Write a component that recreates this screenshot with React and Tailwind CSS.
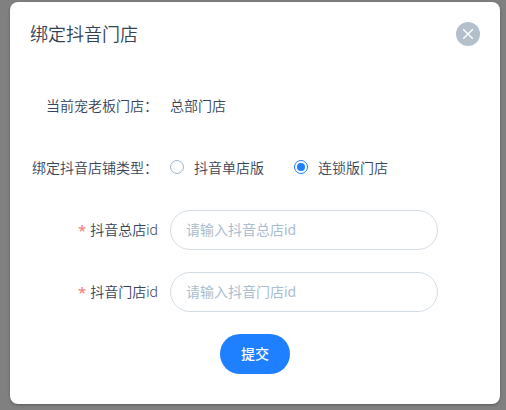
import React from "react";

const FONT = "font-['Noto_Sans','Noto_Sans_CJK_SC',sans-serif]";

function Row({ label, required = false, children }) {
  return (
    <div className="flex h-10 items-center">
      <div className="flex w-[160px] shrink-0 items-center justify-end whitespace-nowrap pr-3">
        {required && <span className="mr-1 text-[15px] font-normal leading-5 text-[#f87878]">*</span>}
        {label}
      </div>
      {children}
    </div>
  );
}

function Radio({ label, checked = false }) {
  return (
    <label className="mr-[30px] flex items-center whitespace-nowrap">
      <span
        className={`mb-0.5 flex size-3.5 items-center justify-center rounded-full border bg-white ${
          checked ? "border-[#1f80ff]" : "border-[#9fb5cc]"
        }`}
      >
        {checked && <span className="size-2 rounded-full bg-[#1f80ff]" />}
      </span>
      <span className="pl-2.5">{label}</span>
    </label>
  );
}

function Field({ placeholder }) {
  return (
    <input
      type="text"
      placeholder={placeholder}
      className="h-10 w-[268px] rounded-full border border-[#d3dce5] bg-white px-[15px] pb-0.5 text-sm font-normal outline-none placeholder:text-[#a9bdd0]"
    />
  );
}

export default function App() {
  return (
    <div className={`h-[410px] w-[506px] overflow-hidden bg-[#808080] pl-2.5 pt-0.5 text-sm font-[350] text-[#36445a] ${FONT}`}>
      <section className="h-[402px] w-[490px] rounded-lg bg-white shadow-[0_1px_3px_rgba(0,0,0,0.3)]">
        <header className="flex h-16 items-center justify-between px-5">
          <h1 className="text-lg font-[350] text-[#334155]">绑定抖音门店</h1>
          <button type="button" aria-label="关闭" className="flex size-6 items-center justify-center rounded-full bg-[#b3c0cc]">
            <svg viewBox="0 0 24 24" className="size-6" fill="none" stroke="white" strokeWidth="1.4">
              <path d="M7.2 7.2l9.6 9.6M16.8 7.2l-9.6 9.6" />
            </svg>
          </button>
        </header>
        <form className="flex flex-col gap-[22px] pt-5">
          <Row label="当前宠老板门店：">
            <span>总部门店</span>
          </Row>
          <Row label="绑定抖音店铺类型：">
            <Radio label="抖音单店版" />
            <Radio label="连锁版门店" checked />
          </Row>
          <Row label="抖音总店id" required>
            <Field placeholder="请输入抖音总店id" />
          </Row>
          <Row label="抖音门店id" required>
            <Field placeholder="请输入抖音门店id" />
          </Row>
          <button type="button" className="h-10 w-[70px] self-center rounded-full bg-[#1f80ff] font-medium text-white">
            提交
          </button>
        </form>
      </section>
    </div>
  );
}
